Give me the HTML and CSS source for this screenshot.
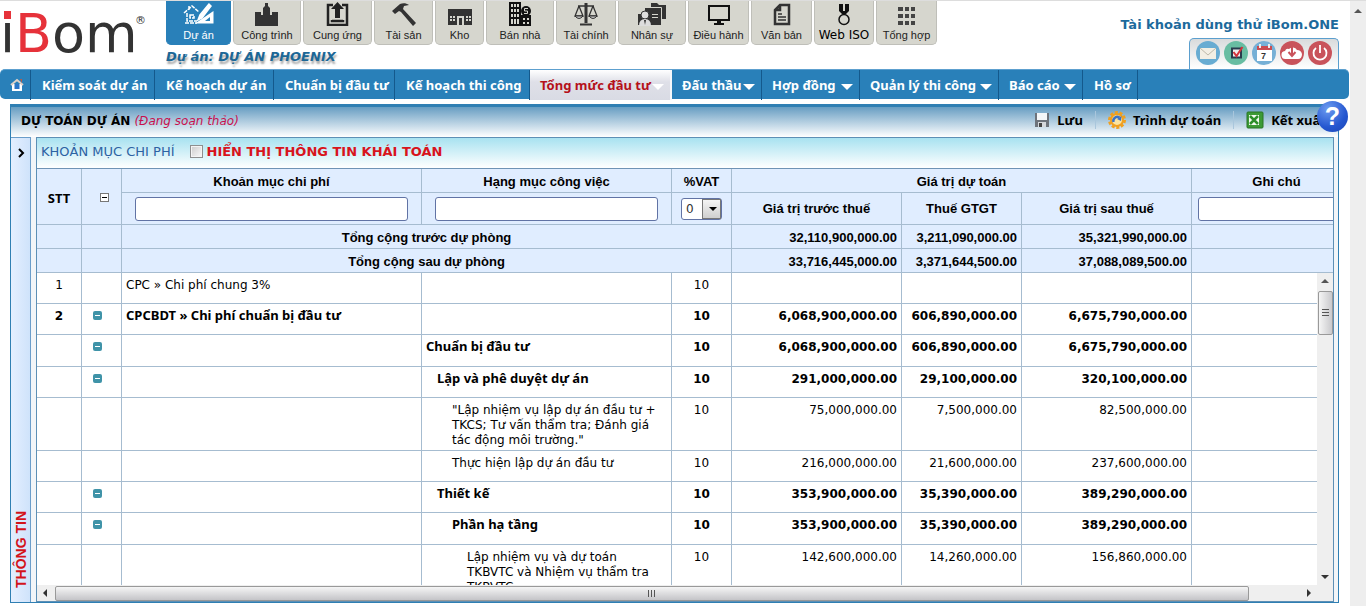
FILE: index.html
```html
<!DOCTYPE html>
<html lang="vi">
<head>
<meta charset="utf-8">
<title>iBom - Dự toán dự án</title>
<link rel="stylesheet" href="styles.css">
</head>
<body>
<div class="page">
  <header class="top">
    <a class="logo" href="#"><span class="logo-i">i</span><span class="logo-b">B</span>om<sup>®</sup></a>
    <div class="modules">
      <div class="apps">
        <button class="app app-on"><svg width="32" height="24" viewBox="0 0 32 24" fill="none" stroke="#fff" stroke-width="1.5"><path d="M1 11 9 4l7 6M4 11v8h10M6 4v4M7 13h4v3H7zM2 21h12" stroke-dasharray="4 1"/><path d="M26 2 17 13l-2 5 4-2 9-12z" fill="#fff"/><path d="M12 21.500h18.500V9z" fill="#fff" stroke="none"/><path d="M22 19h5v-4z" fill="#2980b9" stroke="none"/></svg>Dự án</button>
        <button class="app"><svg width="24" height="24" viewBox="0 0 24 24" fill="#333"><path d="M0 24V10h6v3h2V6l2-2V1h3v3l2 2v7h2v-3h6v14z"/></svg>Công trình</button>
        <button class="app"><svg width="24" height="24" viewBox="0 0 24 24" fill="none" stroke="#222" stroke-width="2.500"><path d="M7 3H2v20h19V3h-5M6 18v1h11v-1" /><path d="M11.500 0 18 7h-4v9H9V7H5z" fill="#222" stroke="none"/></svg>Cung ứng</button>
        <button class="app"><svg width="24" height="24" viewBox="0 0 24 24" fill="#333"><path d="M0 9 8 2c3-1 6-1 9 1l-5 1-1 3 13 14-3 3L9 10l-2-1-4 3z"/></svg>Tài sản</button>
        <button class="app"><svg width="24" height="24" viewBox="0 0 24 24"><path fill="#333" d="M0 7h24v16H0z"/><path fill="#d6d6ce" d="M9 14h7v9H9zM2 14h2v2H2zm3 0h2v2H5zm-3 3h2v2H2zm3 0h2v2H5zm13-3h2v2h-2zm3 0h2v2h-2zm-3 3h2v2h-2zm3 0h2v2h-2z"/><path fill="#333" d="M11 16h3v7h-3z"/></svg>Kho</button>
        <button class="app"><svg width="24" height="24" viewBox="0 0 24 24"><path fill="#111" d="M1 0h12v24H1zM13 13h10v11H13z"/><path fill="#d6d6ce" d="M3 2h2v3H3zm3 0h2v3H6zm3 0h2v3H9zM3 7h2v3H3zm3 0h2v3H6zm3 0h2v3H9zm-6 5h2v3H3zm3 0h2v3H6zm3 0h2v3H9zm-6 5h2v5H3zm3 0h2v5H6zm3 0h2v5H9zm6-1h2v2h-2zm4 0h2v2h-2zm-4 4h2v2h-2zm4 0h2v2h-2z"/><circle cx="18" cy="9" r="5" fill="#111"/><path d="M20 6.500h-3.500v2.500h3v2.500H16" stroke="#d6d6ce" fill="none"/></svg>Bán nhà</button>
        <button class="app"><svg width="24" height="24" viewBox="0 0 24 24" fill="none" stroke="#333"><path d="M4 4h16M5 4 1 14h8L5 4M19 4l-4 10h8L19 4" stroke-width="1.300"/><path d="M1 14q4 5 8 0zM15 14q4 5 8 0z" fill="#ccc"/><path d="M12 1v20" stroke-width="3"/><path d="M6 22.500h12" stroke-width="2"/></svg>Tài chính</button>
        <button class="app"><svg width="30" height="24" viewBox="0 0 30 24"><path fill="#333" d="M14 3V1h6l2 2h7v14h-4V6H14zM8 6h16v17H1V12h7z"/><path stroke="#d6d6ce" fill="none" d="M24.500 19V5.500H12M15 12.500h6M15 15.500h6"/><circle cx="8" cy="13" r="4" fill="#ddd" stroke="#333"/><path fill="#ddd" d="M2 24q0-7 6-7t6 7z"/><path d="m7 18 1 5 1-5" fill="#333"/></svg>Nhân sự</button>
        <button class="app"><svg width="24" height="24" viewBox="0 0 24 24"><path d="M2 4h20v14H2z" fill="none" stroke="#111" stroke-width="2"/><path fill="#111" d="M10 18h4v3h3v2H7v-2h3z"/></svg>Điều hành</button>
        <button class="app"><svg width="20" height="24" viewBox="0 0 20 24" fill="none" stroke="#333"><path stroke-width="2.500" d="M8 3h9v19H3V8zM8 3v5H3"/><path stroke-width="1.500" d="M6 12h4M6 15h8M6 18h8"/></svg>Văn bản</button>
        <button class="app app-iso"><svg width="20" height="24" viewBox="0 0 20 24"><path fill="#111" d="M5 2h10v7l-3 3H8L5 9z"/><path fill="#d6d6ce" d="M9 2h2v7H9z"/><circle cx="10" cy="17.500" r="5" fill="none" stroke="#111" stroke-width="1.500"/></svg>Web ISO</button>
        <button class="app"><svg width="20" height="24" viewBox="0 0 20 24" fill="#444"><path d="M1 5h5v4H1zm7 0h4v4H8zm6 0h4v4h-4zM1 12h5v4H1zm7 0h4v4H8zm6 0h4v4h-4zM1 19h5v4H1zm7 0h4v4H8zm6 0h4v4h-4z"/></svg>Tổng hợp</button>
      </div>
      <div class="project">Dự án: DỰ ÁN PHOENIX</div>
    </div>
    <div class="account">
      <a class="account-name" href="#">Tài khoản dùng thử iBom.ONE</a>
      <div class="tray">
        <button class="round" aria-label="Thư"><svg width="24" height="24" viewBox="0 0 24 24"><circle cx="12" cy="12" r="12" fill="#68acd2"/><path d="M4 7h16v11H4z" fill="#f2efe4"/><path d="m4 7 8 7 8-7" fill="none" stroke="#bdb9aa"/></svg></button>
        <button class="round" aria-label="Công việc"><svg width="24" height="24" viewBox="0 0 24 24"><circle cx="12" cy="12" r="12" fill="#68bda2"/><path d="M8 7.500h9v9H8z" fill="#f1eff0" stroke="#293b4d" stroke-width="2"/><path d="m9.500 11 3 4 6-9" fill="none" stroke="#d4333d" stroke-width="2"/></svg></button>
        <button class="round" aria-label="Lịch"><svg width="24" height="24" viewBox="0 0 24 24"><circle cx="12" cy="12" r="12" fill="#76b0d6"/><path d="M5 6h15v14H5z" fill="#fff"/><path d="M5 5h15v4H5z" fill="#cb4b50"/><path d="M8 3v4M17 3v4" stroke="#eee" stroke-width="2"/><text x="9" y="18" class="day">7</text></svg></button>
        <button class="round" aria-label="Tải xuống"><svg width="24" height="24" viewBox="0 0 24 24"><circle cx="12" cy="12" r="12" fill="#c9535b"/><path d="M6 18a4 4 0 0 1-1-8q1-3 4-2a5 5 0 0 1 8 1q4 0 5 4 0 5-4 5z" fill="#fff"/><path d="M12 5v9M8.500 11l3.500 4 3.500-4" stroke="#c9535b" stroke-width="2" fill="none"/></svg></button>
        <button class="round" aria-label="Thoát"><svg width="24" height="24" viewBox="0 0 24 24"><circle cx="12" cy="12" r="12" fill="#c9535b"/><path d="M8 7a6.500 6.500 0 1 0 8 0M12 4v8" stroke="#fff" stroke-width="1.800" fill="none"/></svg></button>
      </div>
    </div>
  </header>

  <nav class="menu">
    <a class="home" href="#" aria-label="Trang chủ"><svg width="14" height="14" viewBox="0 0 14 14"><path d="M2 6h10v7H2z" fill="#fff"/><path d="m1 7 6-5 6 5" fill="none" stroke="#ddd0c8" stroke-width="2"/><path d="M4.500 6h5v5h-5z" fill="#2b75c9"/><path d="M10 1h2v4" fill="#b95b45"/></svg></a>
    <a href="#">Kiểm soát dự án</a>
    <a href="#">Kế hoạch dự án</a>
    <a href="#">Chuẩn bị đầu tư</a>
    <a href="#">Kế hoạch thi công</a>
    <a href="#" class="current more">Tổng mức đầu tư</a>
    <a href="#" class="more">Đấu thầu</a>
    <a href="#" class="more">Hợp đồng</a>
    <a href="#" class="more">Quản lý thi công</a>
    <a href="#" class="more">Báo cáo</a>
    <a href="#">Hồ sơ</a>
  </nav>

  <main class="panel">
    <div class="titlebar">
      <h1>DỰ TOÁN DỰ ÁN <em>(Đang soạn thảo)</em></h1>
      <div class="tools">
        <button><svg width="16" height="16" viewBox="0 0 16 16"><path d="M1 1h14v14H1z" fill="#6d737b"/><path d="M3 1h10v7H3z" fill="#f4f6f8"/><path d="M4 10h8v5H4z" fill="#d5d8dc"/><path d="M5 11h3v4H5z" fill="#444"/></svg>Lưu</button>
        <button><svg width="18" height="18" viewBox="0 0 18 18"><circle cx="9" cy="9" r="7.500" fill="none" stroke="#f0a020" stroke-width="3" stroke-dasharray="3 1.700"/><circle cx="9" cy="9" r="6" fill="#fbe3a0" stroke="#f0a020" stroke-width="2"/><path d="M5.500 11a4 4 0 0 1 6-4.500" fill="none" stroke="#3c72c4" stroke-width="2.500"/><path d="m13.500 5-.5 5-4-2z" fill="#3c72c4"/></svg>Trình dự toán</button>
        <button><svg width="18" height="18" viewBox="0 0 18 18"><rect x="1" y="1" width="16" height="16" rx="1" fill="#3c9a35" stroke="#287525"/><path d="M3 4h10v10H3z" fill="#f3faf1"/><path d="m4 5 8 8M12 5l-8 8" stroke="#2d8f2a" stroke-width="2.500"/></svg>Kết xuất</button>
      </div>
    </div>
    <button class="help" aria-label="Trợ giúp">?</button>

    <div class="work">
      <aside class="rail">
        <button aria-label="Mở rộng"><svg width="8" height="10" viewBox="0 0 8 10"><path d="m2 1 4 4-4 4" fill="none" stroke="#000" stroke-width="2"/></svg></button>
        <span>THÔNG TIN</span>
      </aside>
      <section class="sheet">
        <div class="filter">
          <span class="filter-title">KHOẢN MỤC CHI PHÍ</span>
          <label><input type="checkbox">HIỂN THỊ THÔNG TIN KHÁI TOÁN</label>
        </div>
        <div class="clip">
          <table class="grid head">
            <colgroup><col class="c-no"><col class="c-fold"><col class="c-item"><col class="c-work"><col class="c-vat"><col class="c-money"><col class="c-tax"><col class="c-money"><col></colgroup>
            <thead>
              <tr class="h1"><th rowspan="2" class="stt">STT</th><th rowspan="2" class="fold-cell"><button class="fold-all" aria-label="Thu gọn"></button></th><th>Khoản mục chi phí</th><th>Hạng mục công việc</th><th>%VAT</th><th colspan="3">Giá trị dự toán</th><th>Ghi chú</th></tr>
              <tr class="h2"><th><input type="text" aria-label="Khoản mục chi phí"></th><th><input type="text" aria-label="Hạng mục công việc"></th><th><span class="pick"><select aria-label="%VAT"><option>0</option><option>5</option><option>10</option></select></span></th><th>Giá trị trước thuế</th><th>Thuế GTGT</th><th>Giá trị sau thuế</th><th class="note"><input type="text" aria-label="Ghi chú"></th></tr>
              <tr class="sum"><td></td><td></td><th colspan="3">Tổng cộng trước dự phòng</th><td>32,110,900,000.00</td><td>3,211,090,000.00</td><td>35,321,990,000.00</td><td></td></tr>
              <tr class="sum"><td></td><td></td><th colspan="3">Tổng cộng sau dự phòng</th><td>33,716,445,000.00</td><td>3,371,644,500.00</td><td>37,088,089,500.00</td><td></td></tr>
            </thead>
          </table>
        </div>
        <div class="rows">
          <div class="clip">
            <table class="grid body">
              <colgroup><col class="c-no"><col class="c-fold"><col class="c-item"><col class="c-work"><col class="c-vat"><col class="c-money"><col class="c-tax"><col class="c-money"><col></colgroup>
              <tbody>
                <tr><td>1</td><td></td><td>CPC » Chi phí chung 3%</td><td></td><td>10</td><td></td><td></td><td></td><td></td></tr>
                <tr class="b"><td>2</td><td><button class="fold" aria-label="Thu gọn"></button></td><td>CPCBDT » Chi phí chuẩn bị đầu tư</td><td></td><td>10</td><td>6,068,900,000.00</td><td>606,890,000.00</td><td>6,675,790,000.00</td><td></td></tr>
                <tr class="b branch"><td></td><td><button class="fold" aria-label="Thu gọn"></button></td><td></td><td>Chuẩn bị đầu tư</td><td>10</td><td>6,068,900,000.00</td><td>606,890,000.00</td><td>6,675,790,000.00</td><td></td></tr>
                <tr class="b"><td></td><td><button class="fold" aria-label="Thu gọn"></button></td><td></td><td class="l1">Lập và phê duyệt dự án</td><td>10</td><td>291,000,000.00</td><td>29,100,000.00</td><td>320,100,000.00</td><td></td></tr>
                <tr><td></td><td></td><td></td><td class="l2">"Lập nhiệm vụ lập dự án đầu tư + TKCS; Tư vấn thẩm tra; Đánh giá tác động môi trường."</td><td>10</td><td>75,000,000.00</td><td>7,500,000.00</td><td>82,500,000.00</td><td></td></tr>
                <tr><td></td><td></td><td></td><td class="l2">Thực hiện lập dự án đầu tư</td><td>10</td><td>216,000,000.00</td><td>21,600,000.00</td><td>237,600,000.00</td><td></td></tr>
                <tr class="b"><td></td><td><button class="fold" aria-label="Thu gọn"></button></td><td></td><td class="l1">Thiết kế</td><td>10</td><td>353,900,000.00</td><td>35,390,000.00</td><td>389,290,000.00</td><td></td></tr>
                <tr class="b branch"><td></td><td><button class="fold" aria-label="Thu gọn"></button></td><td></td><td class="l2">Phần hạ tầng</td><td>10</td><td>353,900,000.00</td><td>35,390,000.00</td><td>389,290,000.00</td><td></td></tr>
                <tr><td></td><td></td><td></td><td class="l3">Lập nhiệm vụ và dự toán TKBVTC và Nhiệm vụ thẩm tra TKBVTC</td><td>10</td><td>142,600,000.00</td><td>14,260,000.00</td><td>156,860,000.00</td><td></td></tr>
              </tbody>
            </table>
          </div>
          <div class="vbar"><i class="up"></i><span class="thumb"></span><i class="down"></i></div>
        </div>
        <div class="hbar"><i class="left"></i><span class="thumb"></span><i class="right"></i></div>
      </section>
    </div>
  </main>
</div>
<div class="pagebar"><i class="up"></i></div>
</body>
</html>
```

FILE: styles.css
```css
* { box-sizing: border-box; }
body {
  margin: 0;
  height: 100vh;
  display: flex;
  overflow: hidden;
  background: #fff;
  border-top: 1px solid #ddd;
  font: 12px/15px "DejaVu Sans", sans-serif;
  color: #000;
}
button { font: inherit; color: inherit; border: 0; padding: 0; background: none; cursor: pointer; }
a { text-decoration: none; color: inherit; }
svg { display: block; flex: none; }

.page { flex: 1; min-width: 0; display: flex; flex-direction: column; }
.pagebar { width: 16px; margin-left: 1px; background: #eee; display: flex; justify-content: center; padding-top: 8px; }

/* header */
.top { display: flex; height: 68px; }
.logo {
  position: relative;
  width: 166px;
  padding: 6px 0 0;
  font-size: 54px;
  line-height: 54px;
  color: #333;
  white-space: nowrap;
}
.logo-i::before { content: ""; position: absolute; left: 4px; top: 10px; width: 7px; height: 8px; background: #e6323a; }
.logo-b { color: #e6323a; }
.logo sup { position: absolute; right: 20px; top: 14px; font-size: 11px; line-height: 11px; }
.modules { flex: 1; }
.apps {
  display: grid;
  grid-template-columns: 65px 68px 69px 59px 49px 68px 60px 68px 61px 61px 60px 61px;
  gap: 2px;
}
.app {
  height: 44px;
  padding-top: 1px;
  display: flex;
  flex-direction: column;
  align-items: center;
  gap: 2px;
  background: #d6d6ce;
  border: 1px solid #bfbfb9;
  border-top: 0;
  border-radius: 0 0 5px 5px;
  font: 11px/14px "Liberation Sans", sans-serif;
  color: #222;
  white-space: nowrap;
}
.app-on { background: #2980b9; border-color: #2980b9; color: #fff; }
.app-iso { font: 12px/14px "DejaVu Sans", sans-serif; color: #000; }
.project {
  margin-top: 4px;
  font-size: 13px;
  font-weight: bold;
  font-style: italic;
  color: #1c6796;
  text-shadow: 1px 3px 2px #aaa;
}
.account { display: flex; flex-direction: column; align-items: flex-end; justify-content: flex-end; padding-right: 10px; }
.account-name { font-size: 13px; font-weight: bold; color: #1c6a9c; margin-bottom: 6px; }
.tray {
  display: flex;
  gap: 4px;
  padding: 2px 6px 4px;
  border: 1px solid #5b9fce;
  border-bottom: 0;
  border-radius: 5px 5px 0 0;
  background: linear-gradient(#d9dbdc, #fff);
}
.day { font: bold 9px "Liberation Sans", sans-serif; fill: #333; }

/* main menu */
.menu {
  display: grid;
  grid-template-columns: 31px 124px 119px 121px 135px 142px 90px 98px 139px 84px 55px;
  height: 30px;
  background: #2980b9;
  border-top: 1px solid #5da0cf;
  border-radius: 5px;
  font: bold 13px/30px "Noto Sans", sans-serif;
  color: #fff;
}
.menu a {
  padding-left: 11px;
  border-right: 1px solid #14598c;
  white-space: nowrap;
  display: flex;
  align-items: center;
  justify-content: space-between;
}
.menu .home { padding-left: 10px; }
.menu .more { padding-right: 6px; padding-left: 10px; }
.menu .more::after { content: ""; border: 6px solid transparent; border-top-color: #fff; border-bottom: 0; margin-top: 3px; }
.menu .current { color: #b5101a; background: linear-gradient(#fff, #dfe0e8 40%, #d9dbe4); border-right: 2px solid #f4f8fb; }

/* panel */
.panel {
  position: relative;
  flex: 1;
  min-height: 0;
  margin: 5px 10px 3px 10px;
  display: flex;
  flex-direction: column;
  border: 1px solid #2f7fb3;
  border-top-width: 3px;
}
.titlebar {
  display: flex;
  justify-content: space-between;
  height: 30px;
  padding: 0 12px 0 10px;
  background: linear-gradient(#679dc2, #fff);
}
.titlebar h1 { margin: 0; font-size: 12px; line-height: 28px; }
.titlebar em { font-weight: normal; color: #c8104e; }
.tools { display: flex; align-items: center; padding-bottom: 4px; font: bold 13px/18px "Noto Sans", sans-serif; }
.tools button { display: flex; align-items: center; gap: 7px; padding: 0 12px; white-space: nowrap; }
.tools button + button { border-left: 1px solid #a9c6dc; }
.tools button:last-child { padding-right: 0; }
.help {
  position: absolute;
  right: -10px;
  top: -6px;
  width: 31px;
  height: 31px;
  border-radius: 50%;
  background: radial-gradient(circle at 35% 25%, #6d9bf0, #2557d0 60%, #1b45b4);
  color: #fff;
  font: bold 25px/31px "Liberation Sans", sans-serif;
}
.work { flex: 1; min-height: 0; display: flex; gap: 5px; padding-right: 4px; background: #f2f5f8; }
.rail {
  width: 20px;
  display: flex;
  flex-direction: column;
  justify-content: space-between;
  align-items: center;
  padding: 10px 0 14px;
  background: linear-gradient(90deg, #e4efff, #cfe3fb);
  border: 1px solid #6a9dca;
  border-width: 1px 1px 0 0;
}
.rail span { writing-mode: vertical-rl; transform: rotate(180deg); font: bold 14px/16px "Liberation Sans", sans-serif; color: #d3131b; }
.sheet {
  flex: 1;
  min-width: 0;
  display: flex;
  flex-direction: column;
  border: 1px solid #5d8fb5;
  background: #fff;
}
.filter {
  display: flex;
  align-items: center;
  gap: 15px;
  height: 31px;
  padding: 0 4px 4px;
  font-size: 13px;
  background: linear-gradient(#a8e2f0, #fff);
  border-bottom: 1px solid #6f93b5;
}
.filter-title { color: #2d62a3; }
.filter label { display: flex; align-items: center; gap: 4px; font-weight: bold; color: #d8141c; }
.filter input {
  appearance: none;
  width: 13px;
  height: 13px;
  margin: 0;
  border: 1px solid #8e8f8f;
  background: linear-gradient(135deg, #ccc, #fafafa);
  box-shadow: inset 0 0 0 1px #f4f4f4;
}
.clip { overflow: hidden; min-width: 0; }

/* cost grid */
.grid { table-layout: fixed; width: calc(100% + 29px); border-collapse: separate; border-spacing: 0; }
.body { width: calc(100% + 45px); }
.c-no { width: 45px; }
.c-fold { width: 40px; }
.c-item { width: 300px; }
.c-work { width: 250px; }
.c-vat { width: 60px; }
.c-money { width: 170px; }
.c-tax { width: 120px; }
.grid th, .grid td { border: 1px solid #a6bcd0; border-width: 0 1px 1px 0; padding: 0 4px; }
.head { background: #e0edff; font: bold 13px/16px "Liberation Sans", sans-serif; }
.head .stt { font: bold 13px/16px "Noto Sans", sans-serif; }
.head td { text-align: right; }
.h1, .sum { height: 24px; }
.grid .h1 th, .grid .sum th, .grid .sum td { padding-top: 2px; }
.head .h1 .fold-cell { padding-left: 9px; }
.h2 { height: 32px; }
.head input {
  display: block;
  width: calc(100% - 18px);
  height: 24px;
  margin: 0 auto;
  border: 1px solid #6173a5;
  border-radius: 3px;
  background: #fff;
}
.head .note { padding: 0 6px; }
.head .note input { width: 100%; }
.pick { position: relative; display: block; width: 41px; height: 22px; margin: 0 auto; }
.pick select {
  appearance: none;
  width: 100%;
  height: 100%;
  padding: 0 4px;
  border: 1px solid #6173a5;
  border-radius: 3px;
  background: #fff;
  font: 12px "DejaVu Sans", sans-serif;
  color: #333;
}
.pick::before {
  content: "";
  position: absolute;
  right: 1px;
  top: 1px;
  width: 17px;
  height: 18px;
  border: 1px solid #777;
  background: linear-gradient(#f4f4f4, #cfcfcf);
  pointer-events: none;
}
.pick::after {
  content: "";
  position: absolute;
  right: 5px;
  top: 9px;
  border: 4px solid transparent;
  border-top-color: #000;
  border-bottom: 0;
  pointer-events: none;
}
.fold-all { display: block; width: 9px; height: 9px; margin: 0 auto; border: 1px solid #777; background: linear-gradient(#000, #000) center / 5px 1px no-repeat #fff; }
.body tr { height: 31px; }
.body .branch { height: 32px; }
.body td { padding: 5px 4px 2px; vertical-align: top; text-align: right; }
.body td:nth-child(1), .body td:nth-child(5) { text-align: center; }
.body td:nth-child(2) { text-align: left; padding-left: 11px; }
.body td:nth-child(3), .body td:nth-child(4) { text-align: left; }
.body .b { font-weight: bold; }
.body .b td:nth-child(3), .body .b td:nth-child(4) { font: bold 13px/13px "Noto Sans", sans-serif; }
.body td.l1 { padding-left: 15px; }
.body td.l2 { padding-left: 30px; }
.body td.l3 { padding-left: 45px; padding-right: 10px; }
.fold { display: block; width: 9px; height: 9px; margin-top: 2px; border-radius: 2px; background: linear-gradient(#fff, #fff) center / 5px 1px no-repeat #3f93a8; }

/* scroll bars */
.rows { flex: 1; min-height: 0; display: flex; overflow: hidden; }
.rows .clip { flex: 1; }
.vbar { width: 16px; padding: 6px 0; display: flex; flex-direction: column; align-items: center; background: #efefef; }
.vbar .thumb {
  width: 15px;
  height: 44px;
  margin: 8px 0 auto;
  border: 1px solid #999;
  border-radius: 2px;
  background: repeating-linear-gradient(#555 0 1px, transparent 1px 3px) center / 7px 9px no-repeat, linear-gradient(90deg, #f5f5f5, #c9c9cc);
}
.hbar { height: 16px; padding: 0 6px; display: flex; align-items: center; background: #efefef; }
.hbar .thumb {
  width: 93%;
  height: 15px;
  margin: 0 auto 0 8px;
  border: 1px solid #999;
  border-radius: 2px;
  background: repeating-linear-gradient(90deg, #555 0 1px, transparent 1px 3px) center / 9px 7px no-repeat, linear-gradient(#f5f5f5, #c4c4c8);
}
.hbar .right { margin-right: 16px; }
.up, .down, .left, .right { width: 0; height: 0; border: 4px solid transparent; }
.up { border-bottom-color: #555; border-top: 0; }
.down { border-top-color: #333; border-bottom: 0; }
.left { border-right-color: #333; border-left: 0; }
.right { border-left-color: #333; border-right: 0; }
```
